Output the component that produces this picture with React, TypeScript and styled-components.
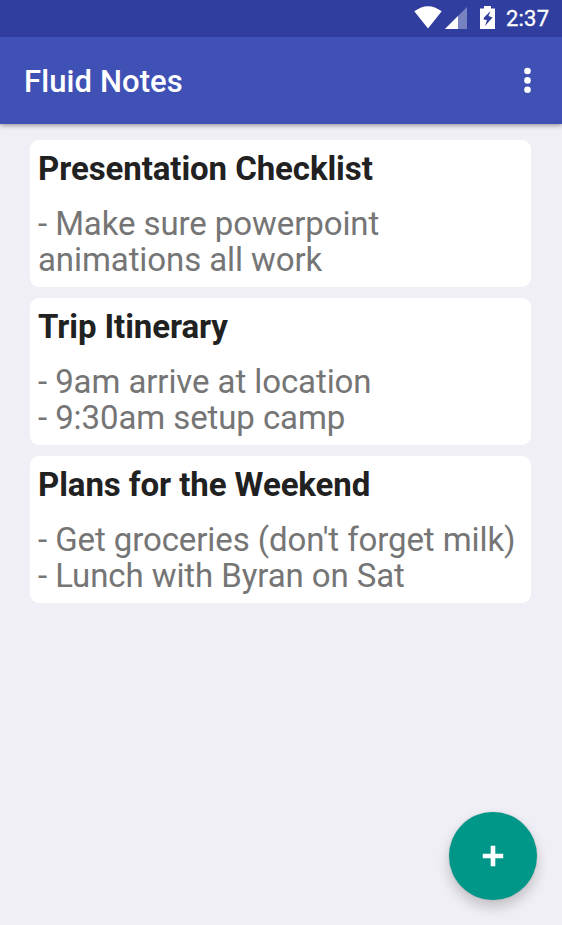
import React from 'react';
import styled, { createGlobalStyle } from 'styled-components';

const Global = createGlobalStyle`
  * { box-sizing: border-box; }
  body { margin: 0; background: #f0eff5; font-family: Roboto, sans-serif; }
`;
const Screen = styled.div`
  width: 562px; height: 925px; display: flex; flex-direction: column;
  background: #f0eff5; position: relative; overflow: hidden;
`;
const StatusBar = styled.div`
  height: 37px; background: #303f9f; display: flex; align-items: center;
  justify-content: flex-end; padding-right: 13px; color: #fff;
  position: relative; z-index: 1;
`;
const Clock = styled.span`
  width: 43px; font-size: 22px; font-weight: 400; line-height: 37px; margin-left: 8px;
  letter-spacing: 0.2px; -webkit-text-stroke: 0.3px #fff; white-space: nowrap;
`;
const StatusIcons = styled.svg`
  display: block; width: 84px; height: 37px;
`;
const AppBar = styled.header`
  height: 87px; background: #3f51b5; color: #fff; display: flex; align-items: center;
  justify-content: space-between; padding: 0 31px 0 24px;
  box-shadow: 0 1px 5px rgba(0,0,0,.45);
`;
const Title = styled.h1`
  margin: 2px 0 0; font-size: 31px; font-weight: 500; line-height: 36px; letter-spacing: 0.1px;
`;
const MenuButton = styled.button`
  border: 0; padding: 0; background: none; display: flex;
`;
const NoteList = styled.main`
  display: flex; flex-direction: column; gap: 11px; padding: 16px 31px 0 30px;
`;
const Card = styled.article`
  height: 147px; background: #fff; border-radius: 9px; padding: 10px 8px 0;
`;
const CardTitle = styled.h2`
  margin: 0; font-size: 33px; font-weight: 700; line-height: 38px; letter-spacing: -0.08px; color: #212121;
`;
const CardBody = styled.p`
  margin: 18px 0 0; font-size: 33px; line-height: 36px; letter-spacing: -0.09px;
  color: #757575; white-space: pre;
`;
const Fab = styled.button`
  position: absolute; left: 449px; top: 812px; width: 88px; height: 88px;
  border: 0; border-radius: 50%; padding: 0; background: #009688;
  display: flex; align-items: center; justify-content: center;
  box-shadow: 0 7px 13px rgba(0,0,0,.2), 0 0 2px rgba(0,0,0,.15);
`;

const notes = [
  { title: 'Presentation Checklist', body: '- Make sure powerpoint\nanimations all work' },
  { title: 'Trip Itinerary', body: '- 9am arrive at location\n- 9:30am setup camp' },
  { title: 'Plans for the Weekend', body: "- Get groceries (don't forget milk)\n- Lunch with Byran on Sat" },
];

export default function App() {
  return (
    <Screen>
      <Global />
      <StatusBar>
        <StatusIcons viewBox="414 0 84 37" fill="#fff">
          <path d="M414.3 11.3Q428 1 441.7 11.3L428 28.5Z" />
          <path d="M467 7V29H445Z" opacity=".35" />
          <path d="M458 16V29H445Z" />
          <path fillRule="evenodd" d="M484 6h7v2.5h4v20.5h-15V8.5h4ZM490.5 11l-6.500 6.500l-.5 2l3.500 .5l-2 6l7.500-8.500l-4-1.500Z" />
        </StatusIcons>
        <Clock>2:37</Clock>
      </StatusBar>
      <AppBar>
        <Title>Fluid Notes</Title>
        <MenuButton aria-label="More options">
          <svg width="8" height="28" viewBox="0 0 8 28" fill="#fff">
            <circle cx="4.5" cy="4" r="3.3" /><circle cx="4.5" cy="13.4" r="3.3" /><circle cx="4.5" cy="22.8" r="3.3" />
          </svg>
        </MenuButton>
      </AppBar>
      <NoteList>
        {notes.map((n) => (
          <Card key={n.title}>
            <CardTitle>{n.title}</CardTitle>
            <CardBody>{n.body}</CardBody>
          </Card>
        ))}
      </NoteList>
      <Fab aria-label="Add note">
        <svg width="22" height="22" viewBox="0 0 22 22" stroke="#fff" strokeWidth="4.6">
          <path d="M11 .8V21.2M.8 11H21.2" />
        </svg>
      </Fab>
    </Screen>
  );
}
